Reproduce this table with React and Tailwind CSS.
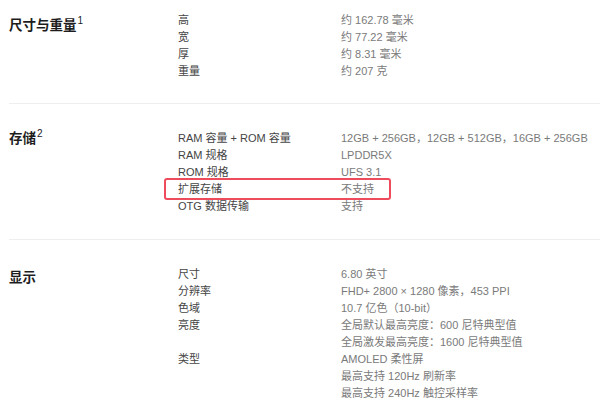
const sections = [
  {
    title: '尺寸与重量',
    sup: '1',
    titleOffset: 'mt-[5px]',
    rows: [
      ['高', '约 162.78 毫米'],
      ['宽', '约 77.22 毫米'],
      ['厚', '约 8.31 毫米'],
      ['重量', '约 207 克'],
    ],
  },
  {
    title: '存储',
    sup: '2',
    titleOffset: 'mt-0',
    rows: [
      ['RAM 容量 + ROM 容量', '12GB + 256GB，12GB + 512GB，16GB + 256GB'],
      ['RAM 规格', 'LPDDR5X'],
      ['ROM 规格', 'UFS 3.1'],
      ['扩展存储', '不支持', true],
      ['OTG 数据传输', '支持'],
    ],
  },
  {
    title: '显示',
    titleOffset: 'mt-[3px]',
    rows: [
      ['尺寸', '6.80 英寸'],
      ['分辨率', 'FHD+ 2800 × 1280 像素，453 PPI'],
      ['色域', '10.7 亿色（10-bit）'],
      ['亮度', '全局默认最高亮度：600 尼特典型值'],
      ['', '全局激发最高亮度：1600 尼特典型值'],
      ['类型', 'AMOLED 柔性屏'],
      ['', '最高支持 120Hz 刷新率'],
      ['', '最高支持 240Hz 触控采样率'],
    ],
  },
];

function SpecRow({ label, value, marked }) {
  return (
    <div className="relative grid grid-cols-[163px_1fr] h-[17px] leading-[17px] text-[11px]">
      {marked && (
        <div className="absolute left-[-14px] top-[-3px] w-[227px] h-[22px] rounded-[3px] border-2 border-[#ee4b5c]" />
      )}
      <span className="text-[#444]">{label}</span>
      <span className="text-[#7a7a7a] whitespace-nowrap">{value}</span>
    </div>
  );
}

export default function App() {
  return (
    <div
      className="w-[600px] h-[407px] overflow-hidden bg-white"
      style={{ fontFamily: '"Liberation Sans", "Noto Sans CJK SC", sans-serif' }}
    >
      {sections.map((s, i) => (
        <div
          key={s.title}
          className={`ml-[9px] grid grid-cols-[169px_1fr] ${
            i === 0 ? 'pt-[12px] pb-[23px]' : 'pt-[26px] pb-[24px]'
          } ${i < sections.length - 1 ? 'border-b border-[#eeeeee]' : ''}`}
        >
          <h2 className={`text-[13.5px] leading-[17px] font-bold text-[#1d1d1d] ${s.titleOffset}`}>
            {s.title}
            {s.sup && <sup className="text-[10px] font-normal ml-[1px] top-[-0.6em]">{s.sup}</sup>}
          </h2>
          <div>
            {s.rows.map((r, j) => (
              <SpecRow key={j} label={r[0]} value={r[1]} marked={r[2]} />
            ))}
          </div>
        </div>
      ))}
    </div>
  );
}
